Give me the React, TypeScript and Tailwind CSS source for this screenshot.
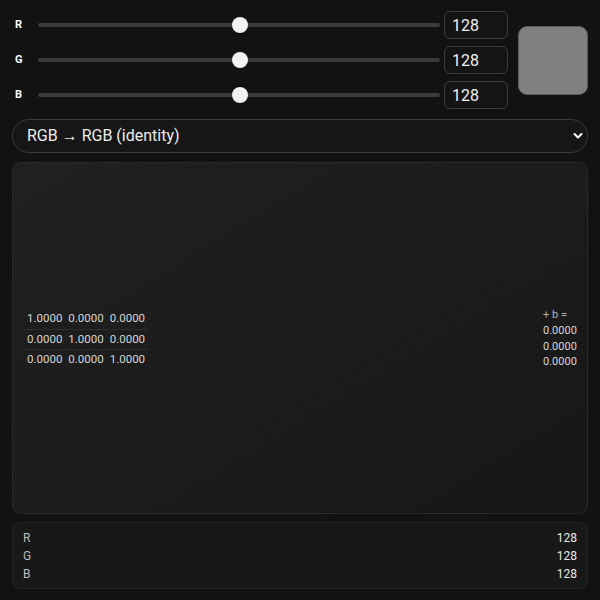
import { useState } from "react";

const font = { fontFamily: "Roboto, 'Noto Sans', sans-serif" };

type Channel = "R" | "G" | "B";

const matrix = [
  [1, 0, 0],
  [0, 1, 0],
  [0, 0, 1],
];
const offset = [0, 0, 0];

function SliderRow({
  label,
  value,
  onChange,
}: {
  label: Channel;
  value: number;
  onChange: (v: number) => void;
}) {
  return (
    <div className="flex h-[28px] items-center">
      <span className="w-[26px] pl-[3px] text-[11px] font-bold text-white">{label}</span>
      <input
        type="range"
        min={0}
        max={255}
        value={value}
        onChange={(e) => onChange(Number(e.target.value))}
        className="h-[4px] flex-1 cursor-pointer appearance-none rounded-full bg-[#3a3a3a] outline-none [&::-webkit-slider-thumb]:h-[16px] [&::-webkit-slider-thumb]:w-[16px] [&::-webkit-slider-thumb]:appearance-none [&::-webkit-slider-thumb]:rounded-full [&::-webkit-slider-thumb]:bg-[#f2f2f2]"
      />
      <input
        type="number"
        value={value}
        onChange={(e) => onChange(Math.max(0, Math.min(255, Number(e.target.value) || 0)))}
        className="ml-[4px] h-[28px] w-[64px] appearance-none rounded-[6px] border border-[#3c3c3c] bg-[#141414] pl-[7px] text-[16px] text-[#f0f0f0] outline-none [&::-webkit-inner-spin-button]:appearance-none"
      />
    </div>
  );
}

export default function App() {
  const [rgb, setRgb] = useState<Record<Channel, number>>({ R: 128, G: 128, B: 128 });
  const [mode, setMode] = useState("identity");

  const set = (k: Channel) => (v: number) => setRgb((prev) => ({ ...prev, [k]: v }));
  const fmt = (n: number) => n.toFixed(4);

  return (
    <div className="flex h-screen flex-col bg-[#121212] px-3 pt-[11px] pb-[11px]" style={font}>
      <div className="flex items-center">
        <div className="flex flex-1 flex-col gap-[7px]">
          <SliderRow label="R" value={rgb.R} onChange={set("R")} />
          <SliderRow label="G" value={rgb.G} onChange={set("G")} />
          <SliderRow label="B" value={rgb.B} onChange={set("B")} />
        </div>
        <div
          className="ml-[10px] h-[69px] w-[70px] rounded-[9px] border border-[#5a5a5a]"
          style={{ backgroundColor: `rgb(${rgb.R}, ${rgb.G}, ${rgb.B})` }}
        />
      </div>

      <div className="relative mt-[10px]">
        <select
          value={mode}
          onChange={(e) => setMode(e.target.value)}
          className="h-[34px] w-full appearance-none rounded-[17px] border border-[#3a3a3a] bg-[#161616] pl-[14px] text-[16px] text-[#ececec] outline-none"
        >
          <option value="identity">RGB → RGB (identity)</option>
        </select>
        <svg
          className="pointer-events-none absolute top-[13px] right-[5px]"
          width="10"
          height="8"
          viewBox="0 0 10 8"
          fill="none"
        >
          <path d="M1.5 2 L5 5.5 L8.5 2" stroke="#ffffff" strokeWidth="2" strokeLinecap="round" strokeLinejoin="round" />
        </svg>
      </div>

      <div className="mt-[9px] flex min-h-0 flex-1 items-center justify-between rounded-[9px] border border-[#2a2a2a] bg-gradient-to-br from-[#202020] to-[#171717] pr-[10px] pl-[11px]">
        <table className="mt-[2px] border-collapse text-[11.5px] text-[#d6d6d6]">
          <tbody>
            {matrix.map((row, i) => (
              <tr key={i} className={i < 2 ? "border-b border-[#2e2e2e]" : ""}>
                {row.map((v, j) => (
                  <td key={j} className="h-[20px] px-[3px] leading-[19px]">
                    {fmt(v)}
                  </td>
                ))}
              </tr>
            ))}
          </tbody>
        </table>
        <div className="flex w-[34px] flex-col text-[11px] leading-[15.5px] text-[#d6d6d6]">
          <span className="mb-[1px] text-[#b0b0b0]">+ b =</span>
          {offset.map((v, i) => (
            <span key={i}>{fmt(v)}</span>
          ))}
        </div>
      </div>

      <div className="mt-[8px] flex h-[67px] flex-col justify-center rounded-[9px] border border-[#262626] bg-[#181818] px-[10px]">
        {(["R", "G", "B"] as Channel[]).map((k) => (
          <div key={k} className="flex h-[18px] items-center justify-between text-[12px]">
            <span className="text-[#bdbdbd]">{k}</span>
            <span className="text-[#e8e8e8]">{rgb[k]}</span>
          </div>
        ))}
      </div>
    </div>
  );
}
